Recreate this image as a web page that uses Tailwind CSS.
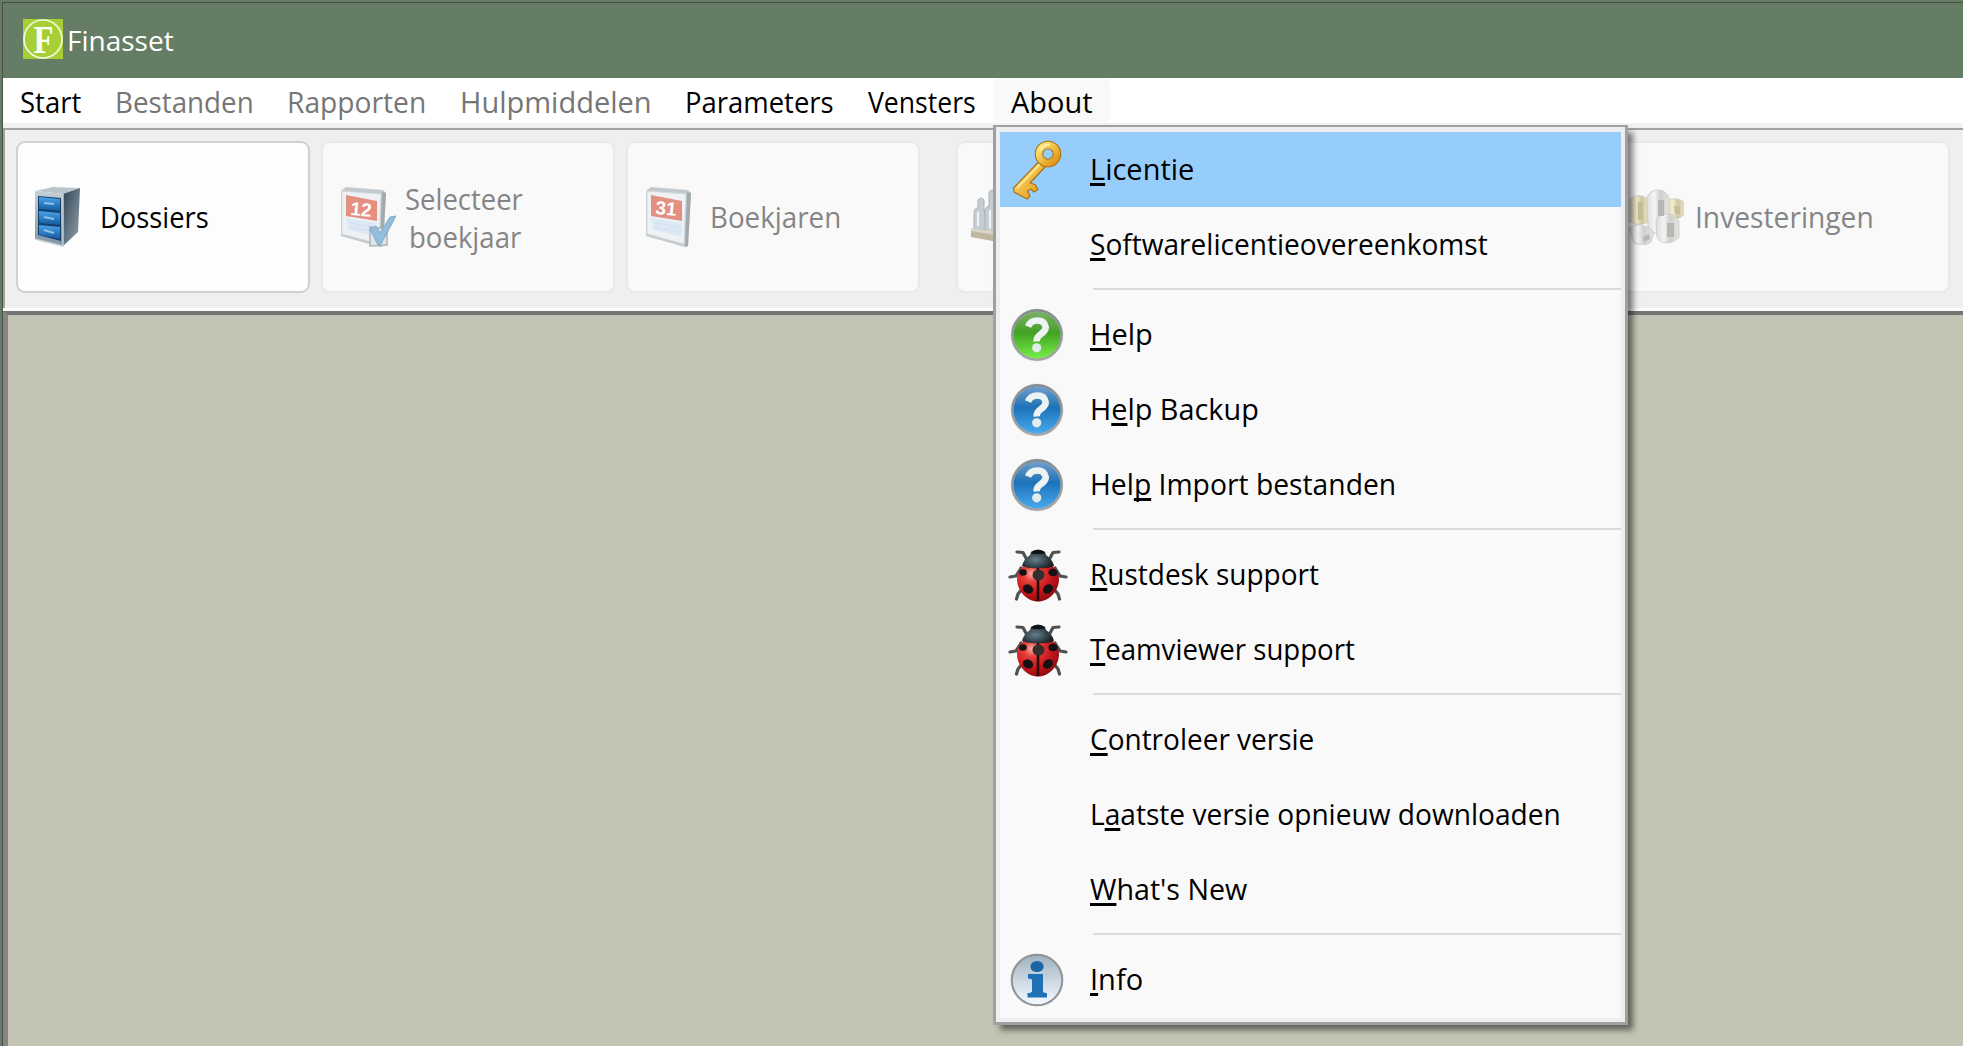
<!DOCTYPE html>
<html lang="nl">
<head>
<meta charset="utf-8">
<title>Finasset</title>
<script src="https://cdn.jsdelivr.net/npm/@tailwindcss/browser@4"></script>
</head>
<body class="w-[1963px] h-[1046px] overflow-hidden bg-[#647d64] font-['Open_Sans','Noto_Sans',sans-serif] text-[29px] leading-none text-black whitespace-nowrap">

<svg class="absolute size-0">
  <defs>
    <linearGradient id="steel" x1="0" y1="0" x2="1" y2="1"><stop offset="0" stop-color="#2f4557"/><stop offset="1" stop-color="#97a2aa"/></linearGradient>
    <linearGradient id="front" x1="0" y1="0" x2="0" y2="1"><stop offset="0" stop-color="#c5d0d6"/><stop offset="1" stop-color="#7e93a3"/></linearGradient>
    <linearGradient id="drawer" x1="0" y1="0" x2="0" y2="1"><stop offset="0" stop-color="#49a4ea"/><stop offset="1" stop-color="#14599c"/></linearGradient>
    <linearGradient id="gold" x1="0" y1="0" x2="1" y2="1"><stop offset="0" stop-color="#ffe67a"/><stop offset="1" stop-color="#e0920f"/></linearGradient>
    <linearGradient id="green" x1="0" y1="0" x2="0" y2="1"><stop offset="0" stop-color="#7fae6c"/><stop offset=".45" stop-color="#43a223"/><stop offset="1" stop-color="#75ee48"/></linearGradient>
    <linearGradient id="blue" x1="0" y1="0" x2="0" y2="1"><stop offset="0" stop-color="#6f9fca"/><stop offset=".45" stop-color="#1d72b8"/><stop offset="1" stop-color="#49a9ee"/></linearGradient>
    <linearGradient id="pale" x1="0" y1="0" x2="0" y2="1"><stop offset="0" stop-color="#9fb1bf"/><stop offset=".55" stop-color="#cfdbe6"/><stop offset="1" stop-color="#f4f9ff"/></linearGradient>
    <linearGradient id="rim" x1="0" y1="0" x2="0" y2="1"><stop offset="0" stop-color="#858b8e"/><stop offset="1" stop-color="#a3a3a3"/></linearGradient>
    <radialGradient id="shell" cx=".35" cy=".3" r=".75"><stop offset="0" stop-color="#ffb0a8"/><stop offset=".25" stop-color="#e5423b"/><stop offset=".65" stop-color="#c5151a"/><stop offset="1" stop-color="#8a0b10"/></radialGradient>
    <radialGradient id="head" cx=".42" cy=".55" r=".6"><stop offset="0" stop-color="#66808f"/><stop offset="1" stop-color="#15191c"/></radialGradient>
    <linearGradient id="silver" x1="0" y1="0" x2="1" y2="0"><stop offset="0" stop-color="#dddfde"/><stop offset=".35" stop-color="#f3f4f3"/><stop offset=".6" stop-color="#cfcfcd"/><stop offset="1" stop-color="#e4e5e3"/></linearGradient>
    <linearGradient id="coin" x1="0" y1="0" x2="1" y2="0"><stop offset="0" stop-color="#e3dcba"/><stop offset=".4" stop-color="#f1ebcb"/><stop offset=".65" stop-color="#cfc5a0"/><stop offset="1" stop-color="#ebe4c0"/></linearGradient>

    <symbol id="cal" viewBox="0 0 46 62">
      <path d="M1 5 6 1 43 4 46 7 43 60 40 61 1 50Z" fill="#c3c9cc"/>
      <path d="M42 6 46 7 43 60 40 61Z" fill="#a2a9ad"/>
      <path d="M2 5 41 8 39 58 2 48Z" fill="#eef2f5" stroke="#d2d8dc"/>
      <path d="M6 9 37 15V35L6 30Z" fill="#e58f80"/>
      <path d="M6 32 37 37V51L8 44Z" fill="#dce9f5"/>
      <path d="M10 37 34 41M10 41 34 46" stroke="#cbdcec" stroke-dasharray="3 1.5"/>
    </symbol>
    <symbol id="orb" viewBox="0 0 54 54">
      <circle cx="27" cy="27" r="26.500" fill="#dfe6e8"/>
      <circle cx="27" cy="27" r="24.600" fill="none" stroke="url(#rim)" stroke-width="2.600"/>
    </symbol>
    <symbol id="question" viewBox="0 0 54 54">
      <path d="M18 18.500Q20.500 12.500 27.500 12.500T35.700 19Q35.700 23 31 26T26.700 33.500" fill="none" stroke="#edf3f2" stroke-width="6.600"/>
      <circle cx="26.700" cy="39.800" r="4.600" fill="#e3edf0"/>
    </symbol>
    <symbol id="bug" viewBox="0 0 60 54">
      <g fill="none" stroke="#4d5151" stroke-width="3.200" stroke-linecap="round" stroke-linejoin="round">
        <path d="M19 12 15 4.500 9 4M41 12 45 4.500 51 4M12 22 8 28 2 29M48 22 52 28 58 29M14 41 10 46 8.500 51M46 41 50 46 51.500 51M13 20 11 24M47 20 49 24"/>
      </g>
      <path d="M30 14C44 14 51 22 51 31 51 43 41 53.500 30 53.500S9 43 9 31C9 22 16 14 30 14Z" fill="url(#shell)"/>
      <path d="M30 17V53" stroke="#2c0808" stroke-width="2.600"/>
      <g fill="#171012">
        <ellipse cx="15" cy="24.500" rx="3.800" ry="3.200"/><ellipse cx="45" cy="24.500" rx="4.600" ry="3.800"/>
        <ellipse cx="30.500" cy="27" rx="6" ry="5.500" fill="#352d2e"/>
        <ellipse cx="20" cy="41" rx="5.400" ry="4.400" transform="rotate(30 20 41)"/><ellipse cx="40" cy="41" rx="5.400" ry="4.400" transform="rotate(-40 40 41)"/>
      </g>
      <path d="M23 4Q30 -1 37 4L38 7Q45 12 46 18 38 21 30 20 22 21 14 18 15 12 22 7Z" fill="url(#head)"/>
      <path d="M23 4Q30 0 37 4L35 6H25Z" fill="#101314"/>
    </symbol>
  </defs>
</svg>

<div class="w-[1961px] h-[1044px] ml-[2px] mt-[2px] pt-px pl-px bg-[#4a4d4a] flex flex-col">
  <header class="h-[75px] shrink-0 bg-[#647d64] flex items-center pl-5 pb-[3px] text-white text-[28px]">
    <svg class="size-10 shrink-0 mr-[4px]" viewBox="0 0 40 40">
      <path d="M0 0H40V40H0Z" fill="#a5cf35"/>
      <circle cx="20" cy="20" r="19" fill="none" stroke="#f1f9dc" stroke-width="1.700"/>
      <text x="10.500" y="33.500" font-family="Liberation Serif, serif" font-weight="bold" font-size="39" textLength="20" lengthAdjust="spacingAndGlyphs" fill="#fbfff0">F</text>
    </svg>
    <span class="pt-px">Finasset</span>
  </header>

  <nav class="h-[45px] shrink-0 bg-white flex items-center [&>span]:pl-[17px] [&>span]:h-full [&>span]:pt-[9px] [&_b]:font-normal [&_b]:inline-block [&_b]:origin-left">
    <span class="w-[95px]"><b class="scale-x-[.949]">Start</b></span>
    <span class="w-[172px] text-[#767676]"><b class="scale-x-[.957]">Bestanden</b></span>
    <span class="w-[173px] text-[#767676]"><b class="scale-x-[.972]">Rapporten</b></span>
    <span class="w-[225px] text-[#767676]"><b>Hulpmiddelen</b></span>
    <span class="w-[183px]"><b class="scale-x-[.947]">Parameters</b></span>
    <span class="w-[142px]"><b class="scale-x-[.917]">Vensters</b></span>
    <span class="w-[117px] bg-[#f9f9f9] rounded-md"><b class="ml-px">About</b></span>
  </nav>
  <div class="h-[5px] shrink-0 bg-[#f2f2f2]"></div>

  <div class="h-[180px] shrink-0 bg-[#efefef] border-t-2 border-l-2 border-[#a2a2a2] pt-[11px] pl-[11px] flex text-[#858585] [&>div]:shrink-0 [&>div]:h-[152px] [&>div]:rounded-[9px] [&>div]:border-2 [&>div]:flex [&>div]:items-center [&_b]:font-normal [&_b]:block [&_b]:origin-left">
    <div class="w-[294px] mr-[11px] bg-[#fdfdfd] border-[#d0d0d0] text-black pl-[17px]">
      <svg class="w-[45px] h-[60px] mr-[20px] shrink-0" viewBox="0 0 45 60">
        <path d="M0 4 18 0 45 1 28 7Z" fill="#b9c5cb"/>
        <path d="M28 7 45 1 43 45 28 59Z" fill="url(#steel)"/>
        <path d="M0 4 28 7V59L0 52Z" fill="url(#front)"/>
        <path d="M3 9 26 11V54L3 48Z" fill="#123f6c"/>
        <path d="M4 10 25 12V24L4 22Z" fill="url(#drawer)"/><path d="M4 24 25 26V38L4 36Z" fill="url(#drawer)"/><path d="M4 38 25 40V52L4 48Z" fill="url(#drawer)"/>
        <path d="M9 16 19 17M9 30 19 32M9 43 19 46" stroke="#8fc0ea" stroke-width="2"/>
        <path d="M28 7V59L0 52" fill="none" stroke="#c3ced5" stroke-width="1.500"/>
      </svg>
      <b class="scale-x-[.942] pb-[2px]">Dossiers</b>
    </div>
    <div class="w-[294px] mr-[11px] bg-[#f9f9f9] border-[#e9e9e9] pl-[17px]">
      <div class="w-[65px] h-[62px] shrink-0">
        <svg class="w-[56px] h-[62px]" viewBox="0 0 56 62">
          <use href="#cal" width="46" height="62"/>
          <text x="10" y="29" font-family="Liberation Sans" font-weight="bold" font-size="19" fill="#fff" transform="rotate(5 10 29)">12</text>
          <path d="M30 41 47 43V59L30 60Z" fill="#dfe5ea" stroke="#aab4bb" stroke-width="1.500"/>
          <path d="M30 43 36 40 40 47 50 31 56 30 41 58 38 59Z" fill="#91bedf" stroke="#86a8c0"/>
        </svg>
      </div>
      <div class="leading-[38px] pt-[2px]"><b class="scale-x-[.947]">Selecteer</b><b class="ml-[4px] scale-x-[.95]">boekjaar</b></div>
    </div>
    <div class="w-[294px] mr-[36px] bg-[#f9f9f9] border-[#e9e9e9] pl-[17px]">
      <svg class="w-[46px] h-[62px] mr-[19px] shrink-0" viewBox="0 0 46 62">
        <use href="#cal" width="46" height="62"/>
        <text x="10" y="28" font-family="Liberation Sans" font-weight="bold" font-size="19" fill="#fff" transform="rotate(5 10 28)">31</text>
      </svg>
      <b class="scale-x-[.957] pb-[2px]">Boekjaren</b>
    </div>
    <div class="w-[294px] mr-[350px] bg-[#f9f9f9] border-[#e9e9e9] pl-[12px]">
      <svg class="w-[50px] h-[58px] shrink-0" viewBox="0 0 50 58">
        <g fill="#c6ced3" stroke="#a9b2b7"><path d="M4 42V26Q4 20 8 20V12Q11 8 14 12V20L17 42Z"/><path d="M15 44V22Q17 18 19 18V4Q23 0 27 4V46Z"/></g>
        <path d="M8 24V38M20 22V40" stroke="#f2f5f6" stroke-width="2"/>
        <path d="M1 40 50 48V58L1 49Z" fill="#c0b7a3"/><path d="M1 40 50 48V51L1 43Z" fill="#ddd5c5"/>
      </svg>
    </div>
    <div class="w-[350px] bg-[#f9f9f9] border-[#e9e9e9] pl-[22px]">
      <svg class="w-[60px] h-[56px] mr-[11px] shrink-0" viewBox="0 0 60 56">
        <g stroke="#c9c9c4" stroke-width=".8">
          <path d="M6 10Q15 3 24 10V33Q15 38 6 33Z" fill="url(#coin)"/>
          <path d="M42 12Q51 7 60 13V25Q56 31 46 29Z" fill="url(#coin)"/>
          <path d="M23 8Q26 1 34 1T45 9V40Q34 48 24 42Z" fill="url(#silver)"/>
          <path d="M32 32Q35 25 43 25T55 32V48Q50 54 43 54T33 48Z" fill="url(#silver)"/>
          <path d="M5 40Q10 34 18 36T30 43L27 53Q20 58 10 54Z" fill="url(#silver)"/>
        </g>
        <path d="M34 11H40V27H34ZM43 34H50V48H43ZM19 48 25 45 26 50 20 53Z" fill="#b9b7b3"/>
        <path d="M14 13H19V31H14ZM50 17H56V25H51Z" fill="#c7bd98"/>
      </svg>
      <b class="scale-x-[.972] pb-[2px]">Investeringen</b>
    </div>
  </div>
  <div class="h-[3px] shrink-0 bg-[#fafafa]"></div>
  <main class="grow bg-[#c4c4b4] border-t-[4px] border-l-[5px] border-t-[#747474] border-l-[#858585]"></main>
</div>

<!-- About menu -->
<div class="absolute left-[993px] top-[125px] w-[635px] h-[900px] border-[3px] border-t-2 border-[#a0a0a0] bg-[#eeeeee] shadow-[6px_6px_6px_-1px_rgba(0,0,0,0.5)] pt-[5px] pl-[4px]">
  <div class="w-[621px] h-[886px] bg-[#f9f9f9] flex flex-col [&>div]:h-[75px] [&>div]:shrink-0 [&>div]:flex [&>div]:items-center [&>hr]:shrink-0 [&>hr]:mt-[6px] [&>hr]:mb-[7px] [&>hr]:h-[2px] [&>hr]:border-0 [&>hr]:ml-[93px] [&>hr]:bg-[#dadada] [&_i]:w-[90px] [&_i]:shrink-0 [&_i]:h-full [&_i]:flex [&_i]:items-center [&_b]:font-normal [&_b]:block [&_b]:origin-left [&_b]:pb-[3px] [&_u]:decoration-[2.5px] [&_u]:underline-offset-[3px] [&_u]:[text-decoration-skip-ink:none]">
    <div class="bg-[#97cdfb]">
      <i class="pl-[12px]"><svg class="w-[50px] h-[60px]" viewBox="0 0 50 60">
        <path d="M27.500 21 1.500 48 2 52 15 59 18 56 15.500 51 19 49 22 52 26 49.500 23 44.500 18 43 33 27Z" fill="url(#gold)" stroke="#a8741c" stroke-width="1.300" stroke-linejoin="round"/>
        <path d="M28 24 5 48" stroke="#ffe98f" stroke-width="2"/>
        <ellipse cx="36" cy="14" rx="9" ry="9" fill="none" stroke="#a8741c" stroke-width="8.600"/>
        <ellipse cx="36" cy="14" rx="9" ry="9" fill="none" stroke="url(#gold)" stroke-width="6.400"/>
        <path d="M27.500 11Q31 4.500 38 4.500" fill="none" stroke="#fff0a2" stroke-width="2"/>
      </svg></i>
      <b><u>L</u>icentie</b>
    </div>
    <div><i></i><b class="scale-x-[.968]"><u>S</u>oftwarelicentieovereenkomst</b></div>
    <hr>
    <div><i class="pl-[10px]"><svg class="size-[54px]" viewBox="0 0 54 54"><use href="#orb"/><circle cx="27" cy="27" r="23.500" fill="url(#green)"/><use href="#question"/></svg></i><b><u>H</u>elp</b></div>
    <div><i class="pl-[10px]"><svg class="size-[54px]" viewBox="0 0 54 54"><use href="#orb"/><circle cx="27" cy="27" r="23.500" fill="url(#blue)"/><use href="#question"/></svg></i><b class="scale-x-[.994]">H<u>e</u>lp Backup</b></div>
    <div><i class="pl-[10px]"><svg class="size-[54px]" viewBox="0 0 54 54"><use href="#orb"/><circle cx="27" cy="27" r="23.500" fill="url(#blue)"/><use href="#question"/></svg></i><b class="scale-x-[.975]">Hel<u>p</u> Import bestanden</b></div>
    <hr>
    <div><i class="pl-[8px]"><svg class="w-[60px] h-[54px]"><use href="#bug"/></svg></i><b class="scale-x-[.965]"><u>R</u>ustdesk support</b></div>
    <div><i class="pl-[8px]"><svg class="w-[60px] h-[54px]"><use href="#bug"/></svg></i><b class="scale-x-[.952]"><u>T</u>eamviewer support</b></div>
    <hr>
    <div><i></i><b class="scale-x-[.965]"><u>C</u>ontroleer versie</b></div>
    <div><i></i><b class="scale-x-[.969]">L<u>a</u>atste versie opnieuw downloaden</b></div>
    <div><i></i><b class="scale-x-[.987]"><u>W</u>hat's New</b></div>
    <hr>
    <div><i class="pl-[10px]"><svg class="size-[54px]" viewBox="0 0 54 54"><use href="#orb"/><circle cx="27" cy="27" r="24.300" fill="url(#pale)"/><circle cx="27" cy="27" r="25.300" fill="none" stroke="#929598" stroke-width="1.800"/>
      <ellipse cx="27" cy="13.500" rx="6.600" ry="5.500" fill="#1d66a5"/><path d="M18 21H33V38Q33 40 37 40V44.500H17.500V40Q22 40 22 38V27Q22 25.500 18 25.500Z" fill="#2070b5"/></svg></i><b><u>I</u>nfo</b></div>
  </div>
</div>
</body>
</html>
